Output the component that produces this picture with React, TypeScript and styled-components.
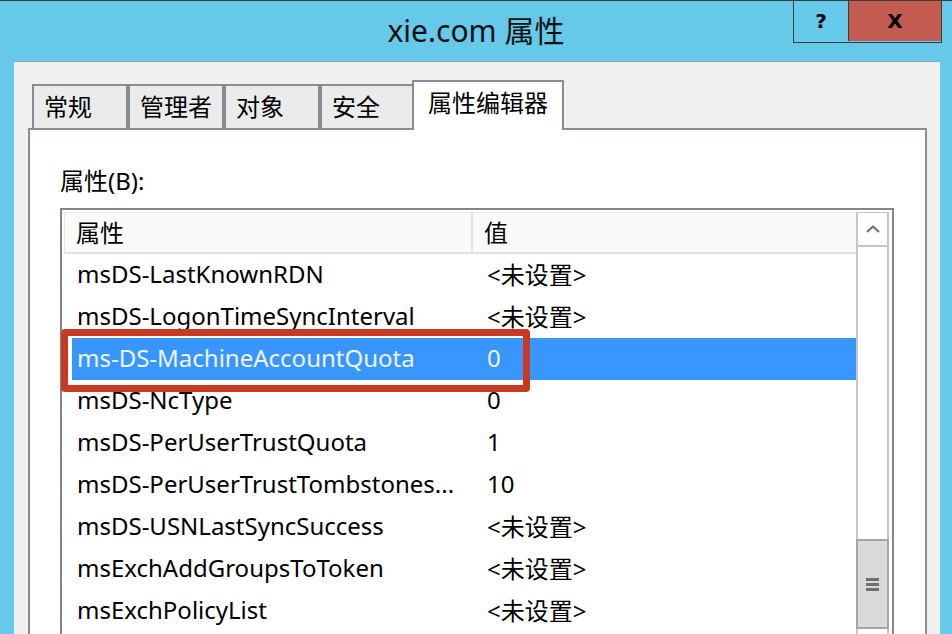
import React from "react";
import styled, { createGlobalStyle } from "styled-components";

const Global = createGlobalStyle`
  html, body { margin: 0; padding: 0; }
  body {
    background: #66c9ea;
    overflow: hidden;
    font-family: "Noto Sans", "Noto Sans CJK SC", sans-serif;
    color: #000;
  }
`;

const Window = styled.div`
  width: 952px;
  height: 634px;
  box-sizing: border-box;
  background: #66c9ea;
  border-top: 1px solid #3c3c3c;
  display: flex;
  flex-direction: column;
  overflow: hidden;
`;

const TitleBar = styled.div`
  height: 60px;
  flex-shrink: 0;
  display: grid;
  grid-template-columns: 1fr auto 1fr;
  align-items: start;
`;

const Title = styled.div`
  grid-column: 2;
  align-self: center;
  font-size: 30px;
  line-height: 36px;
  color: #111;
  white-space: nowrap;
`;

const Controls = styled.div`
  grid-column: 3;
  justify-self: end;
  margin-right: 10px;
  display: flex;
  height: 41px;
  border: 1px solid #3c3c3c;
  border-top: none;
`;

const CtrlButton = styled.div<{ $w: number; $bg: string; $sep?: boolean }>`
  width: ${(p) => p.$w}px;
  height: 40px;
  background: ${(p) => p.$bg};
  border-left: ${(p) => (p.$sep ? "1px solid #3c3c3c" : "none")};
  display: flex;
  align-items: center;
  justify-content: center;
  font-family: "DejaVu Sans", sans-serif;
  font-weight: bold;
  font-size: 20px;
  color: #000;
`;

const Body = styled.div`
  flex: 1;
  margin: 0 12px 0 14px;
  background: #f0f0f0;
  border-top: 1px solid #8ca7b6;
  padding: 0 13px 0 14px;
  display: flex;
  flex-direction: column;
  min-height: 0;
`;

const TabStrip = styled.div`
  margin-top: 18px;
  height: 48px;
  padding-left: 4px;
  display: flex;
  align-items: flex-end;
  flex-shrink: 0;
`;

const Tab = styled.div<{ $w: number; $active?: boolean }>`
  box-sizing: border-box;
  width: ${(p) => p.$w}px;
  height: ${(p) => (p.$active ? 50 : 44)}px;
  margin-left: ${(p) => (p.$active ? -2 : 0)}px;
  margin-bottom: ${(p) => (p.$active ? -2 : 0)}px;
  position: relative;
  z-index: ${(p) => (p.$active ? 2 : 1)};
  background: ${(p) => (p.$active ? "#fff" : "#ebebeb")};
  border: 2px solid #8a8d94;
  border-bottom: none;
  padding-left: ${(p) => (p.$active ? 14 : 10)}px;
  padding-bottom: ${(p) => (p.$active ? 9 : 4)}px;
  display: flex;
  align-items: center;
  font-size: 24px;
  white-space: nowrap;
`;

const Panel = styled.div`
  flex: 1;
  background: #fff;
  border: 2px solid #8a8d94;
  border-bottom: none;
  padding: 35px 31px 0 30px;
  display: flex;
  flex-direction: column;
  min-height: 0;
`;

const Label = styled.div`
  font-size: 24px;
  line-height: 32px;
  margin-bottom: 11px;
`;

const ListBox = styled.div`
  position: relative;
  flex: 1;
  border: 2px solid #82868e;
  border-bottom: none;
  padding: 2px 3px 0 2px;
  display: grid;
  grid-template-columns: 1fr 33px;
  min-height: 0;
`;

const ListContent = styled.div`
  display: flex;
  flex-direction: column;
  overflow: hidden;
`;

const Header = styled.div`
  height: 42px;
  box-sizing: border-box;
  flex-shrink: 0;
  background: #fafafa;
  border-top: 1px solid #e6e6e6;
  border-left: 1px solid #e6e6e6;
  border-bottom: 2px solid #e1e1e1;
  display: grid;
  grid-template-columns: 408px 1fr;
`;

const HeaderCell = styled.div<{ $divider?: boolean }>`
  display: flex;
  align-items: center;
  padding-left: 11px;
  padding-bottom: 2px;
  border-right: ${(p) => (p.$divider ? "2px solid #e1e1e1" : "none")};
  font-size: 24px;
`;

const Row = styled.div<{ $selected?: boolean }>`
  height: 42px;
  box-sizing: border-box;
  padding-bottom: 3px;
  flex-shrink: 0;
  margin-left: 8px;
  display: grid;
  grid-template-columns: 403px 1fr;
  align-items: center;
  background: ${(p) => (p.$selected ? "#3797fe" : "transparent")};
  color: ${(p) => (p.$selected ? "#f2f4ff" : "#000")};
  font-size: 24px;
  white-space: nowrap;
`;

const NameCell = styled.div`
  padding-left: 5px;
  overflow: hidden;
`;

const ValueCell = styled.div`
  padding-left: 12px;
  overflow: hidden;
`;

const Highlight = styled.div`
  position: absolute;
  left: -1px;
  top: 119px;
  width: 469px;
  height: 63px;
  box-sizing: border-box;
  border: 7px solid #c93a22;
  border-radius: 4px;
  pointer-events: none;
`;

const ScrollBar = styled.div`
  border-left: 2px solid #c6c6c6;
  border-right: 2px solid #c6c6c6;
  display: flex;
  flex-direction: column;
  background: #fff;
`;

const ScrollButton = styled.div`
  height: 32px;
  flex-shrink: 0;
  border-top: 1px solid #c6c6c6;
  border-bottom: 2px solid #c6c6c6;
  display: flex;
  align-items: center;
  justify-content: center;
`;

const Track = styled.div`
  height: 292px;
  flex-shrink: 0;
`;

const Thumb = styled.div`
  height: 90px;
  flex-shrink: 0;
  box-sizing: border-box;
  margin: 0 -2px;
  background: #dadada;
  border: 2px solid #a6a6a6;
  display: flex;
  flex-direction: column;
  align-items: center;
  justify-content: center;
  gap: 2px;
`;

const Grip = styled.div`
  width: 13px;
  height: 3px;
  background: #6f6f6f;
`;

const rows: { name: string; value: string; selected?: boolean }[] = [
  { name: "msDS-LastKnownRDN", value: "<未设置>" },
  { name: "msDS-LogonTimeSyncInterval", value: "<未设置>" },
  { name: "ms-DS-MachineAccountQuota", value: "0", selected: true },
  { name: "msDS-NcType", value: "0" },
  { name: "msDS-PerUserTrustQuota", value: "1" },
  { name: "msDS-PerUserTrustTombstones...", value: "10" },
  { name: "msDS-USNLastSyncSuccess", value: "<未设置>" },
  { name: "msExchAddGroupsToToken", value: "<未设置>" },
  { name: "msExchPolicyList", value: "<未设置>" },
];

const tabs = [
  { label: "常规", w: 96 },
  { label: "管理者", w: 96 },
  { label: "对象", w: 96 },
  { label: "安全", w: 94 },
  { label: "属性编辑器", w: 152, active: true },
];

export default function App() {
  return (
    <>
      <Global />
      <Window>
        <TitleBar>
          <Title>xie.com 属性</Title>
          <Controls>
            <CtrlButton $w={54} $bg="#66c9ea">?</CtrlButton>
            <CtrlButton $w={92} $bg="#c25b50" $sep>
              X
            </CtrlButton>
          </Controls>
        </TitleBar>
        <Body>
          <TabStrip>
            {tabs.map((t) => (
              <Tab key={t.label} $w={t.w} $active={t.active}>
                {t.label}
              </Tab>
            ))}
          </TabStrip>
          <Panel>
            <Label>属性(B):</Label>
            <ListBox>
              <ListContent>
                <Header>
                  <HeaderCell $divider>属性</HeaderCell>
                  <HeaderCell>值</HeaderCell>
                </Header>
                {rows.map((r) => (
                  <Row key={r.name} $selected={r.selected}>
                    <NameCell>{r.name}</NameCell>
                    <ValueCell>{r.value}</ValueCell>
                  </Row>
                ))}
              </ListContent>
              <ScrollBar>
                <ScrollButton>
                  <svg width="14" height="8" viewBox="0 0 14 8">
                    <polyline
                      points="1,7 7,1.5 13,7"
                      fill="none"
                      stroke="#6a6a6a"
                      strokeWidth="2"
                    />
                  </svg>
                </ScrollButton>
                <Track />
                <Thumb>
                  <Grip />
                  <Grip />
                  <Grip />
                </Thumb>
              </ScrollBar>
              <Highlight />
            </ListBox>
          </Panel>
        </Body>
      </Window>
    </>
  );
}
